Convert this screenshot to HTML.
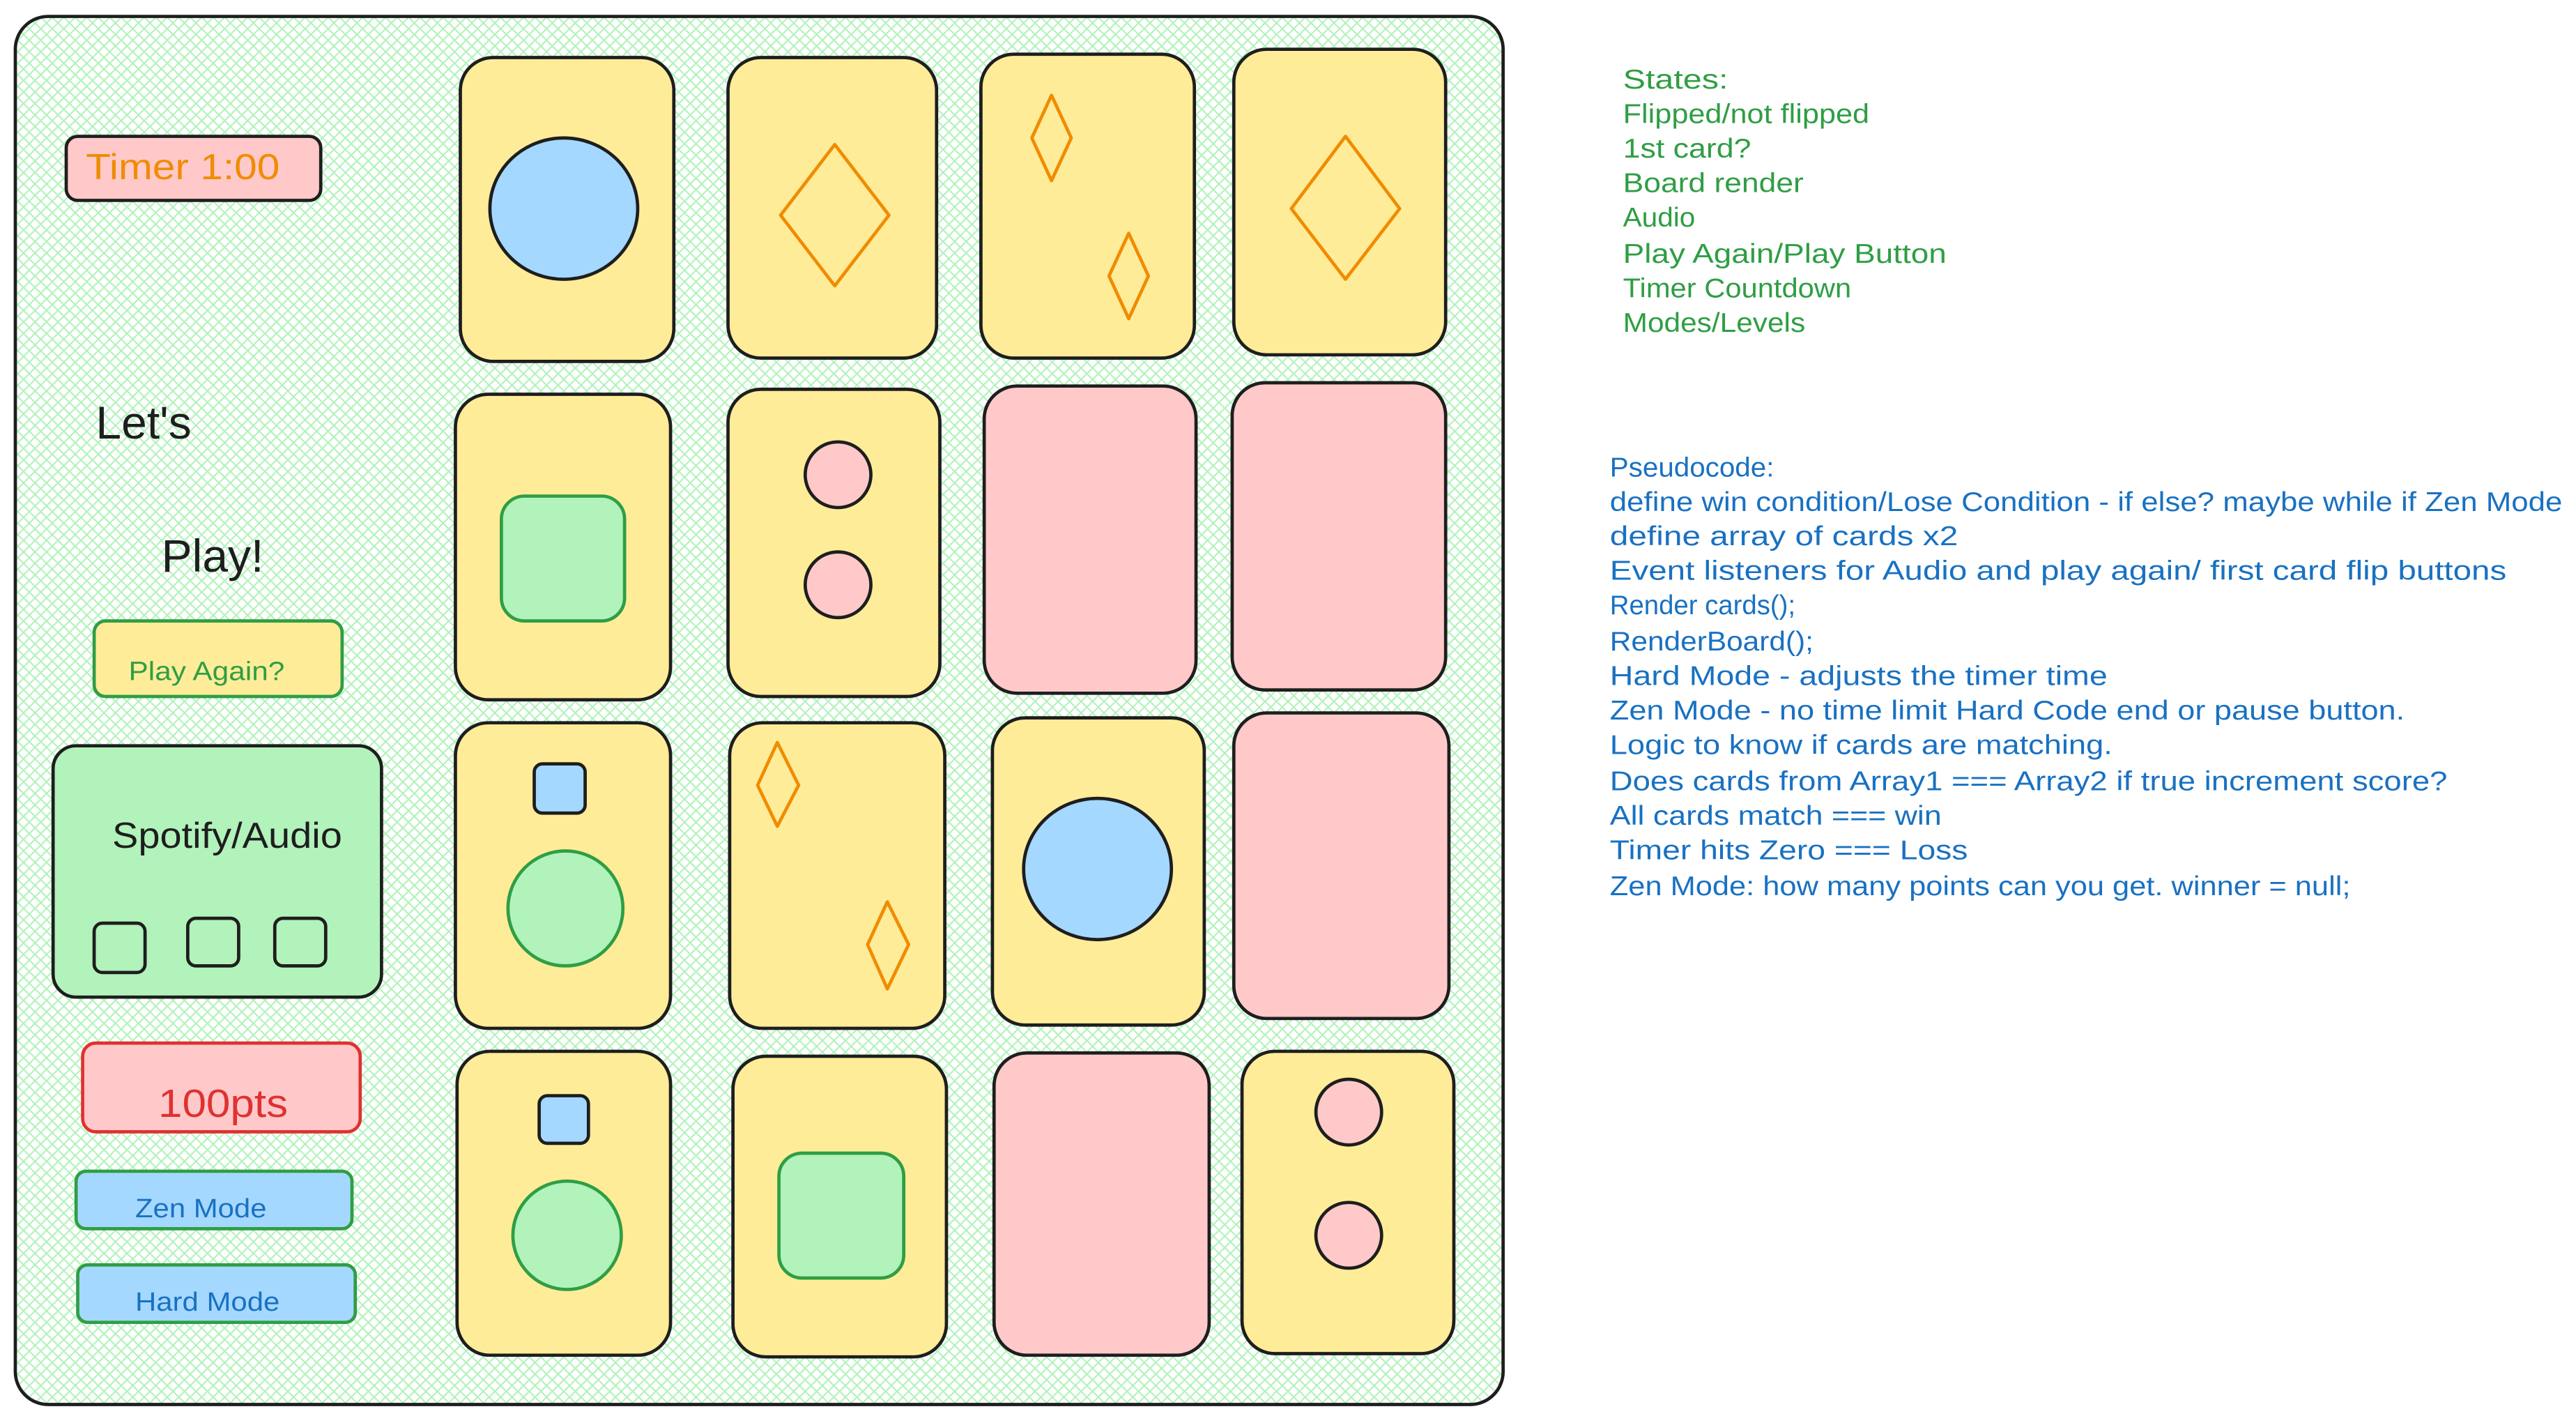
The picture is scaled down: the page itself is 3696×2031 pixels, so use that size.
<!DOCTYPE html>
<html><head><meta charset="utf-8"><style>
html,body{margin:0;padding:0;background:#fff;}
svg{display:block;}
text{font-family:"Liberation Sans",sans-serif;}
</style></head><body>
<svg width="3696" height="2031" viewBox="0 0 1568 862" xmlns="http://www.w3.org/2000/svg">
<defs>
<pattern id="h" width="7" height="7" patternUnits="userSpaceOnUse">
<path d="M0 0L7 7M7 0L0 7" stroke="#b2f2bb" stroke-width="0.9"/>
</pattern>
</defs>
<rect width="1568" height="862" fill="#fff"/>
<rect x="9" y="10" width="906" height="845" rx="20" fill="url(#h)" stroke="#1e1e1e" stroke-width="2"/>
<g stroke="#1e1e1e" stroke-width="2">
<rect x="40" y="83" width="155" height="39" rx="7" fill="#ffc9c9"/>
<rect x="57" y="378" width="151" height="46" rx="7" fill="#ffec99" stroke="#2f9e44"/>
<rect x="32" y="454" width="200" height="153" rx="14" fill="#b2f2bb"/>
<rect x="57" y="562" width="31" height="30" rx="5" fill="#b2f2bb"/>
<rect x="114" y="559" width="31" height="29" rx="5" fill="#b2f2bb"/>
<rect x="167" y="559" width="31" height="29" rx="5" fill="#b2f2bb"/>
<rect x="50" y="635" width="169" height="54" rx="8" fill="#ffc9c9" stroke="#e03131"/>
<rect x="46" y="713" width="168" height="35" rx="6" fill="#a5d8ff" stroke="#2f9e44"/>
<rect x="47" y="770" width="169" height="35" rx="6" fill="#a5d8ff" stroke="#2f9e44"/>
</g>
<text x="52" y="109" font-size="22" fill="#f08c00" textLength="118" lengthAdjust="spacingAndGlyphs">Timer 1:00</text>
<text x="58" y="267" font-size="28" fill="#1e1e1e">Let's</text>
<text x="98" y="348" font-size="28" fill="#1e1e1e">Play!</text>
<text x="78" y="414" font-size="16" fill="#2f9e44" textLength="95" lengthAdjust="spacingAndGlyphs">Play Again?</text>
<text x="68" y="516" font-size="22" fill="#1e1e1e" textLength="140" lengthAdjust="spacingAndGlyphs">Spotify/Audio</text>
<text x="96" y="680" font-size="24" fill="#e03131" textLength="79" lengthAdjust="spacingAndGlyphs">100pts</text>
<text x="82" y="741" font-size="16" fill="#1971c2" textLength="80" lengthAdjust="spacingAndGlyphs">Zen Mode</text>
<text x="82" y="798" font-size="16" fill="#1971c2" textLength="88" lengthAdjust="spacingAndGlyphs">Hard Mode</text>

<g stroke="#1e1e1e" stroke-width="2">
<rect x="280" y="35" width="130" height="185" rx="20" fill="#ffec99"/>
<rect x="443" y="35" width="127" height="183" rx="20" fill="#ffec99"/>
<rect x="597" y="33" width="130" height="185" rx="20" fill="#ffec99"/>
<rect x="751" y="30" width="129" height="186" rx="20" fill="#ffec99"/>
<rect x="277" y="240" width="131" height="186" rx="20" fill="#ffec99"/>
<rect x="443" y="237" width="129" height="187" rx="20" fill="#ffec99"/>
<rect x="599" y="235" width="129" height="187" rx="20" fill="#ffc9c9"/>
<rect x="750" y="233" width="130" height="187" rx="20" fill="#ffc9c9"/>
<rect x="277" y="440" width="131" height="186" rx="20" fill="#ffec99"/>
<rect x="444" y="440" width="131" height="186" rx="20" fill="#ffec99"/>
<rect x="604" y="437" width="129" height="187" rx="20" fill="#ffec99"/>
<rect x="751" y="434" width="131" height="186" rx="20" fill="#ffc9c9"/>
<rect x="278" y="640" width="130" height="185" rx="20" fill="#ffec99"/>
<rect x="446" y="643" width="130" height="183" rx="20" fill="#ffec99"/>
<rect x="605" y="641" width="131" height="184" rx="20" fill="#ffc9c9"/>
<rect x="756" y="640" width="129" height="184" rx="20" fill="#ffec99"/>

<ellipse cx="343" cy="127" rx="45" ry="43" fill="#a5d8ff"/>
<ellipse cx="668" cy="529" rx="45" ry="43" fill="#a5d8ff"/>
<rect x="305" y="302" width="75" height="76" rx="14" fill="#b2f2bb" stroke="#2f9e44"/>
<rect x="474" y="702" width="76" height="76" rx="14" fill="#b2f2bb" stroke="#2f9e44"/>
<circle cx="510" cy="289" r="20" fill="#ffc9c9"/>
<circle cx="510" cy="356" r="20" fill="#ffc9c9"/>
<circle cx="821" cy="677" r="20" fill="#ffc9c9"/>
<circle cx="821" cy="752" r="20" fill="#ffc9c9"/>
<rect x="325" y="465" width="31" height="30" rx="5" fill="#a5d8ff"/>
<rect x="328" y="667" width="30" height="29" rx="5" fill="#a5d8ff"/>
<circle cx="344" cy="553" r="35" fill="#b2f2bb" stroke="#2f9e44"/>
<circle cx="345" cy="752" r="33" fill="#b2f2bb" stroke="#2f9e44"/>
</g>
<g fill="none" stroke="#f08c00" stroke-width="2" stroke-linejoin="round">
<path d="M508 88L541 131L508 174L475 131Z"/>
<path d="M819 83L852 127L819 170L786 127Z"/>
<path d="M640 58L652 84L640 110L628 84Z"/>
<path d="M687 142L699 168L687 194L675 168Z"/>
<path d="M473 452L486 478L473 503L461 478Z"/>
<path d="M540 549L553 575L540 602L528 575Z"/>
</g>

<g font-size="16.5" fill="#2f9e44" lengthAdjust="spacingAndGlyphs">
<text x="988" y="54" textLength="64" lengthAdjust="spacingAndGlyphs">States:</text>
<text x="988" y="75" textLength="150" lengthAdjust="spacingAndGlyphs">Flipped/not flipped</text>
<text x="988" y="96" textLength="78" lengthAdjust="spacingAndGlyphs">1st card?</text>
<text x="988" y="117" textLength="110" lengthAdjust="spacingAndGlyphs">Board render</text>
<text x="988" y="138" textLength="44" lengthAdjust="spacingAndGlyphs">Audio</text>
<text x="988" y="160" textLength="197" lengthAdjust="spacingAndGlyphs">Play Again/Play Button</text>
<text x="988" y="181" textLength="139" lengthAdjust="spacingAndGlyphs">Timer Countdown</text>
<text x="988" y="202" textLength="111" lengthAdjust="spacingAndGlyphs">Modes/Levels</text>
</g>
<g font-size="16.5" fill="#1971c2">
<text x="980" y="290" textLength="100" lengthAdjust="spacingAndGlyphs">Pseudocode:</text>
<text x="980" y="311" textLength="580" lengthAdjust="spacingAndGlyphs">define win condition/Lose Condition - if else? maybe while if Zen Mode</text>
<text x="980" y="332" textLength="212" lengthAdjust="spacingAndGlyphs">define array of cards x2</text>
<text x="980" y="353" textLength="546" lengthAdjust="spacingAndGlyphs">Event listeners for Audio and play again/ first card flip buttons</text>
<text x="980" y="374" textLength="113" lengthAdjust="spacingAndGlyphs">Render cards();</text>
<text x="980" y="396" textLength="124" lengthAdjust="spacingAndGlyphs">RenderBoard();</text>
<text x="980" y="417" textLength="303" lengthAdjust="spacingAndGlyphs">Hard Mode - adjusts the timer time</text>
<text x="980" y="438" textLength="484" lengthAdjust="spacingAndGlyphs">Zen Mode - no time limit Hard Code end or pause button.</text>
<text x="980" y="459" textLength="306" lengthAdjust="spacingAndGlyphs">Logic to know if cards are matching.</text>
<text x="980" y="481" textLength="510" lengthAdjust="spacingAndGlyphs">Does cards from Array1 === Array2 if true increment score?</text>
<text x="980" y="502" textLength="202" lengthAdjust="spacingAndGlyphs">All cards match === win</text>
<text x="980" y="523" textLength="218" lengthAdjust="spacingAndGlyphs">Timer hits Zero === Loss</text>
<text x="980" y="545" textLength="451" lengthAdjust="spacingAndGlyphs">Zen Mode: how many points can you get. winner = null;</text>
</g>
</svg>
</body></html>
